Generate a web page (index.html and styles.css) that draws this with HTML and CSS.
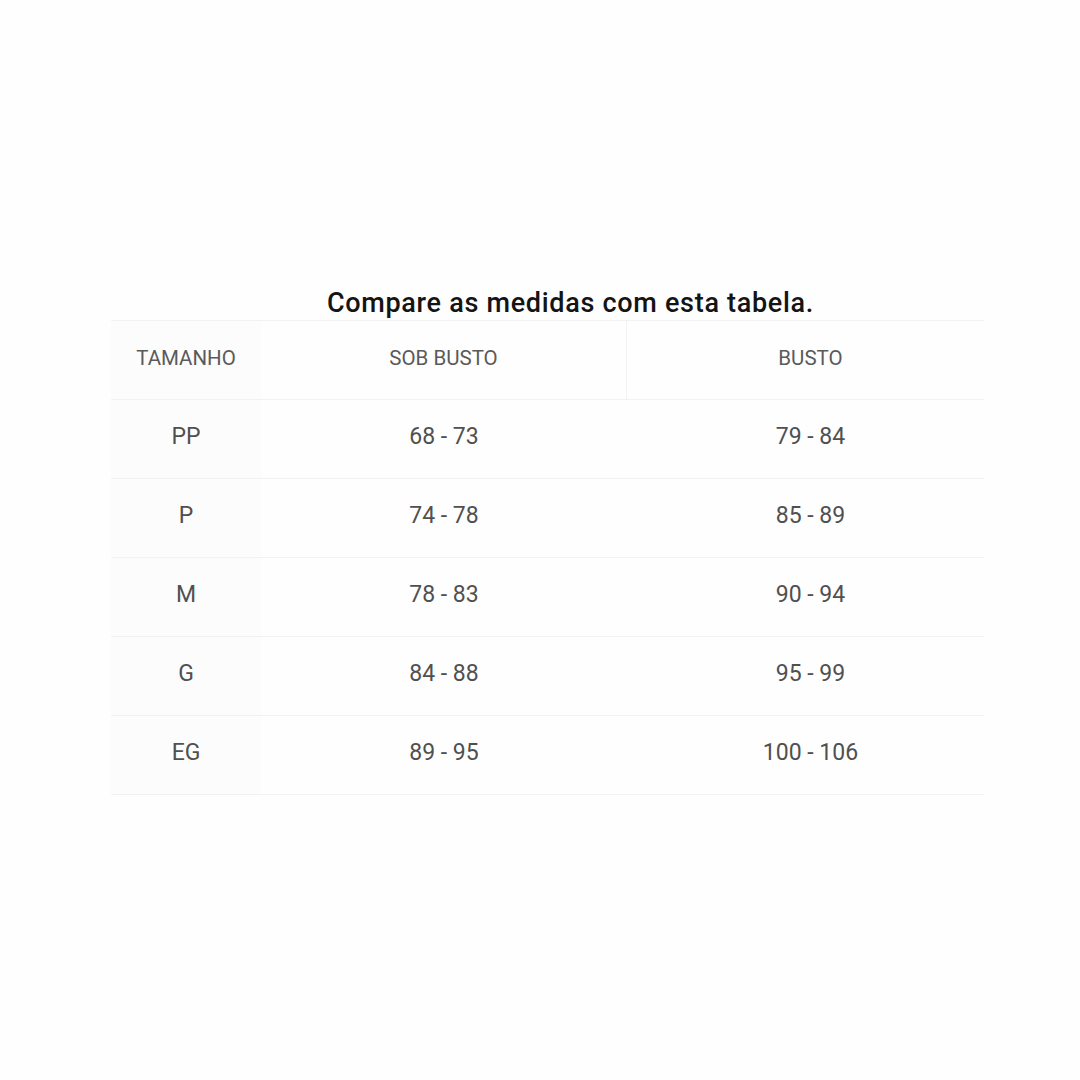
FILE: index.html
```html
<!DOCTYPE html>
<html lang="pt">
<head>
<meta charset="utf-8">
<link rel="stylesheet" href="styles.css">
</head>
<body>
<div class="wrap">
  <h1 class="title">Compare as medidas com esta tabela.</h1>
  <div class="table">
    <div class="row head">
      <div class="cell c1">TAMANHO</div>
      <div class="cell c2 split">SOB BUSTO</div>
      <div class="cell c3">BUSTO</div>
    </div>
    <div class="row">
      <div class="cell c1">PP</div>
      <div class="cell c2">68 - 73</div>
      <div class="cell c3">79 - 84</div>
    </div>
    <div class="row">
      <div class="cell c1">P</div>
      <div class="cell c2">74 - 78</div>
      <div class="cell c3">85 - 89</div>
    </div>
    <div class="row">
      <div class="cell c1">M</div>
      <div class="cell c2">78 - 83</div>
      <div class="cell c3">90 - 94</div>
    </div>
    <div class="row">
      <div class="cell c1">G</div>
      <div class="cell c2">84 - 88</div>
      <div class="cell c3">95 - 99</div>
    </div>
    <div class="row">
      <div class="cell c1">EG</div>
      <div class="cell c2">89 - 95</div>
      <div class="cell c3">100 - 106</div>
    </div>
  </div>
</div>
</body>
</html>
```

FILE: styles.css
```css
html, body {
  margin: 0;
  padding: 0;
  background: #fefefe;
}
body {
  width: 1080px;
  height: 1080px;
  font-family: Roboto, "Liberation Sans", sans-serif;
}
.wrap {
  padding-top: 286px;
  margin-left: 111px;
  width: 873px;
}
.title {
  margin: 0;
  padding-left: 46px;
  text-align: center;
  font-size: 27px;
  font-weight: 500;
  color: #141414;
  line-height: 34px;
  letter-spacing: 0.7px;
}
.table {
  border-top: 1px solid #f2f2f2;
}
.row {
  display: grid;
  grid-template-columns: 150px 366px 357px;
  height: 78px;
  border-bottom: 1px solid #f2f2f2;
}
.cell {
  display: flex;
  align-items: center;
  justify-content: center;
  padding-bottom: 5px;
  box-sizing: border-box;
  font-size: 23px;
  color: #505050;
}
.c1 {
  background: #fcfcfc;
}
.c3 {
  padding-left: 10px;
}
.head .cell {
  font-size: 20.5px;
  color: #5a5a5a;
}
.split {
  border-right: 1px solid #f2f2f2;
}
```
